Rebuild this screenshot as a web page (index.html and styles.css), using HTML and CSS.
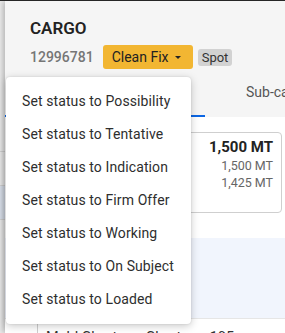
FILE: index.html
```html
<!DOCTYPE html>
<html>
<head>
<meta charset="utf-8">
<link rel="stylesheet" href="styles.css">
</head>
<body>
<div class="topline"></div>
<div class="page">
  <div class="backdrop">
    <div class="bd-row"></div>
    <div class="bd-row sel"></div>
    <div class="bd-row"></div>
  </div>
  <div class="panel">
    <div class="header">
      <div class="title">CARGO</div>
      <div class="meta">
        <span class="id">12996781</span>
        <span class="status">Clean Fix <span class="caret"></span></span>
        <span class="badge">Spot</span>
      </div>
    </div>
    <div class="tabs">
      <div class="tab active"></div>
      <div class="tab">Sub-cargoes</div>
    </div>
    <div class="content">
      <div class="card">
        <div class="qty">1,500 MT</div>
        <div class="sub">1,500 MT</div>
        <div class="sub">1,425 MT</div>
      </div>
      <div class="band"></div>
      <div class="row"><span class="cell">Mabl Charterer Charterer 195</span></div>
    </div>
  </div>
</div>
<ul class="menu">
  <li>Set status to Possibility</li>
  <li>Set status to Tentative</li>
  <li>Set status to Indication</li>
  <li>Set status to Firm Offer</li>
  <li>Set status to Working</li>
  <li>Set status to On Subject</li>
  <li>Set status to Loaded</li>
</ul>
</body>
</html>
```
FILE: styles.css
```css
html, body {
  margin: 0;
  padding: 0;
  width: 285px;
  height: 333px;
  overflow: hidden;
  background: #fff;
  font-family: Roboto, "Liberation Sans", sans-serif;
}
.topline {
  height: 1px;
  background: #2b2b2b;
}
.page {
  display: flex;
  width: 285px;
  height: 332px;
}
.backdrop {
  width: 5px;
  flex: none;
  background: #ececec;
  display: flex;
  flex-direction: column;
  padding-top: 150px;
}
.bd-row {
  height: 33px;
  border-top: 1px solid #d4d4d4;
}
.bd-row.sel {
  background: #dde3ee;
}
.panel {
  flex: 1;
  min-width: 0;
  overflow: hidden;
  display: flex;
  flex-direction: column;
  box-shadow: -2px 0 6px rgba(0,0,0,0.25);
  position: relative;
  z-index: 1;
}
.header {
  flex: none;
  background: #f5f5f5;
  padding: 16px 0 0 25px;
}
.title {
  font-size: 17px;
  font-weight: 600;
  color: #222;
  line-height: 22px;
}
.meta {
  display: flex;
  align-items: center;
  margin-top: 6px;
}
.id {
  font-size: 14px;
  color: #767676;
  font-weight: 500;
}
.status {
  margin-left: 9px;
  width: 90px;
  height: 24px;
  box-sizing: border-box;
  background: #f2b632;
  border-radius: 3px;
  padding-left: 9px;
  font-size: 14px;
  color: #222;
  display: flex;
  align-items: center;
  font-weight: 400;
}
.caret {
  margin-left: auto;
  margin-right: 12px;
  width: 0;
  height: 0;
  border-left: 3.5px solid transparent;
  border-right: 3.5px solid transparent;
  border-top: 3.5px solid #222;
}
.badge {
  margin-left: 5px;
  background: #d2d2d2;
  border-radius: 3px;
  font-size: 13px;
  color: #333;
  padding: 1px 4px;
  line-height: 15px;
}
.tabs {
  flex: none;
  background: #f5f5f5;
  height: 48px;
  box-sizing: border-box;
  display: flex;
  align-items: stretch;
}
.tab {
  font-size: 14px;
  color: #555;
  display: flex;
  align-items: center;
  white-space: nowrap;
  flex: none;
}
.tab.active {
  width: 200px;
  border-bottom: 2px solid #0b66e4;
  box-sizing: border-box;
}
.tab:not(.active) {
  margin-left: 41px;
  padding-bottom: 2px;
}
.content {
  flex: 1;
  min-height: 0;
  background: #fff;
  display: flex;
  flex-direction: column;
}
.card {
  flex: none;
  margin: 15px 3px 0 120px;
  height: 81px;
  box-sizing: border-box;
  border: 1px solid #cfcfcf;
  border-radius: 4px;
  padding: 5px 8px 0 0;
  text-align: right;
  color: #666;
}
.qty {
  font-size: 15px;
  font-weight: 700;
  color: #222;
  line-height: 19px;
}
.sub {
  font-size: 12.5px;
  line-height: 17px;
}
.band {
  flex: none;
  margin-top: 25px;
  height: 80px;
  background: #f1f5fd;
}
.row {
  flex: none;
  height: 40px;
  display: flex;
  border-top: 1px solid #e6e6e6;
}
.cell {
  margin-left: 32px;
  border-left: 1px solid #cfcfcf;
  padding: 10px 0 0 8px;
  font-size: 14.5px;
  color: #333;
  white-space: nowrap;
}
.menu {
  position: absolute;
  z-index: 5;
  left: 6px;
  top: 77px;
  width: 185px;
  margin: 0;
  padding: 8px 0;
  list-style: none;
  background: #fff;
  border-radius: 4px;
  box-shadow: 0 2px 8px rgba(0,0,0,0.22), 0 0 2px rgba(0,0,0,0.12);
}
.menu li {
  height: 33px;
  line-height: 33px;
  padding-left: 16px;
  font-size: 14px;
  color: #2e2e2e;
  letter-spacing: 0.1px;
}
```
